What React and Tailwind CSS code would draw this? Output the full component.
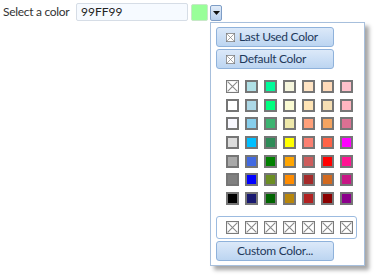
import React from "react";

const rows = [
  [null, "#B0E0E6", "#00FA9A", "#F5F5DC", "#FFE4C4", "#FFDAB9", "#FFC0CB"],
  ["#FFFFFF", "#ADD8E6", "#00FF7F", "#FAFAD2", "#FFE4B5", "#F5DEB3", "#FFB6C1"],
  ["#F8F8FF", "#87CEEB", "#3CB371", "#EEE8AA", "#FFA07A", "#F4A460", "#DB7093"],
  ["#DCDCDC", "#00BFFF", "#2E8B57", "#FFFF00", "#FA8072", "#FF6347", "#FF00FF"],
  ["#A9A9A9", "#4169E1", "#008000", "#FFA500", "#CD5C5C", "#FF0000", "#FF1493"],
  ["#808080", "#0000FF", "#6B8E23", "#FF8C00", "#A52A2A", "#D2691E", "#C71585"],
  ["#000000", "#191970", "#006400", "#B8860B", "#B22222", "#8B0000", "#8B008B"],
];

function EmptyBox({ size = 12 }) {
  return (
    <svg width={size} height={size} viewBox="0 0 12 12" className="block shrink-0">
      <rect x="0.5" y="0.5" width="11" height="11" fill="#fff" stroke="#7a7a7a" />
      <path d="M1.5 1.5 L10.5 10.5 M10.5 1.5 L1.5 10.5" stroke="#8a8a8a" strokeWidth="1" />
    </svg>
  );
}

function BlueButton({ children, className = "" }) {
  return (
    <button
      className={`flex items-center h-[20px] w-[118px] rounded-[3px] border border-[#8fb2db] bg-gradient-to-b from-[#dce9f9] to-[#bcd5f1] text-[#1e395b] ${className}`}
    >
      {children}
    </button>
  );
}

export default function App() {
  return (
    <div className="relative w-[378px] h-[276px] bg-white text-[11px]" style={{ fontFamily: 'Lato, "Open Sans", sans-serif' }}>
      {/* top row */}
      <div className="flex items-center pt-[3px] pl-[3px]">
        <span className="w-[73px] text-[#333] text-[12px] tracking-[-0.3px]">Select a color</span>
        <div className="w-[112px] h-[18px] border border-[#d6dde6] rounded-[2px] bg-[#f6faff] flex items-center pl-[4px] text-[#222] text-[12px]">
          99FF99
        </div>
        <div className="ml-[3px] w-[17px] h-[17px] rounded-[2px] border border-[#c8e8c8] bg-[#99ff99]" />
        <button className="ml-[2px] mt-[1px] w-[12px] h-[16px] rounded-[2px] border border-[#7e9dc6] bg-gradient-to-b from-[#e2ecf8] to-[#b7cfee] flex items-center justify-center">
          <svg width="7" height="4" viewBox="0 0 7 4">
            <path d="M0 0 H7 L3.5 4 Z" fill="#111" />
          </svg>
        </button>
      </div>

      {/* dropdown */}
      <div className="absolute left-[210px] top-[22px] w-[155px] h-[244px] bg-white border border-[#a7bfdc] shadow-[4px_4px_4px_rgba(0,0,0,0.35)] pl-[5px] pt-[4px]">
        <div className="flex flex-col gap-[2px] text-[12px] tracking-[-0.3px]">
          <BlueButton className="pl-[9px] gap-[4px]">
            <EmptyBox size={9} />
            <span>Last Used Color</span>
          </BlueButton>
          <BlueButton className="pl-[9px] gap-[4px]">
            <EmptyBox size={9} />
            <span>Default Color</span>
          </BlueButton>
        </div>

        <div className="mt-[11px] ml-[10px] flex flex-col gap-[5.7px]">
          {rows.map((row, i) => (
            <div key={i} className="flex gap-[6px]">
              {row.map((c, j) =>
                c ? (
                  <div key={j} className="w-[13px] h-[13px] border-2 border-[#767676]" style={{ backgroundColor: c }} />
                ) : (
                  <EmptyBox key={j} size={13} />
                )
              )}
            </div>
          ))}
        </div>

        <div className="mt-[11px] w-[141px] h-[23px] rounded-[3px] border border-[#9cbbe0] flex items-center pl-[9px] gap-[6px]">
          {Array.from({ length: 7 }).map((_, i) => (
            <EmptyBox key={i} size={13} />
          ))}
        </div>

        <BlueButton className="mt-[2px] justify-center text-[12px] tracking-[-0.3px]">
          <span>Custom Color...</span>
        </BlueButton>
      </div>
    </div>
  );
}
